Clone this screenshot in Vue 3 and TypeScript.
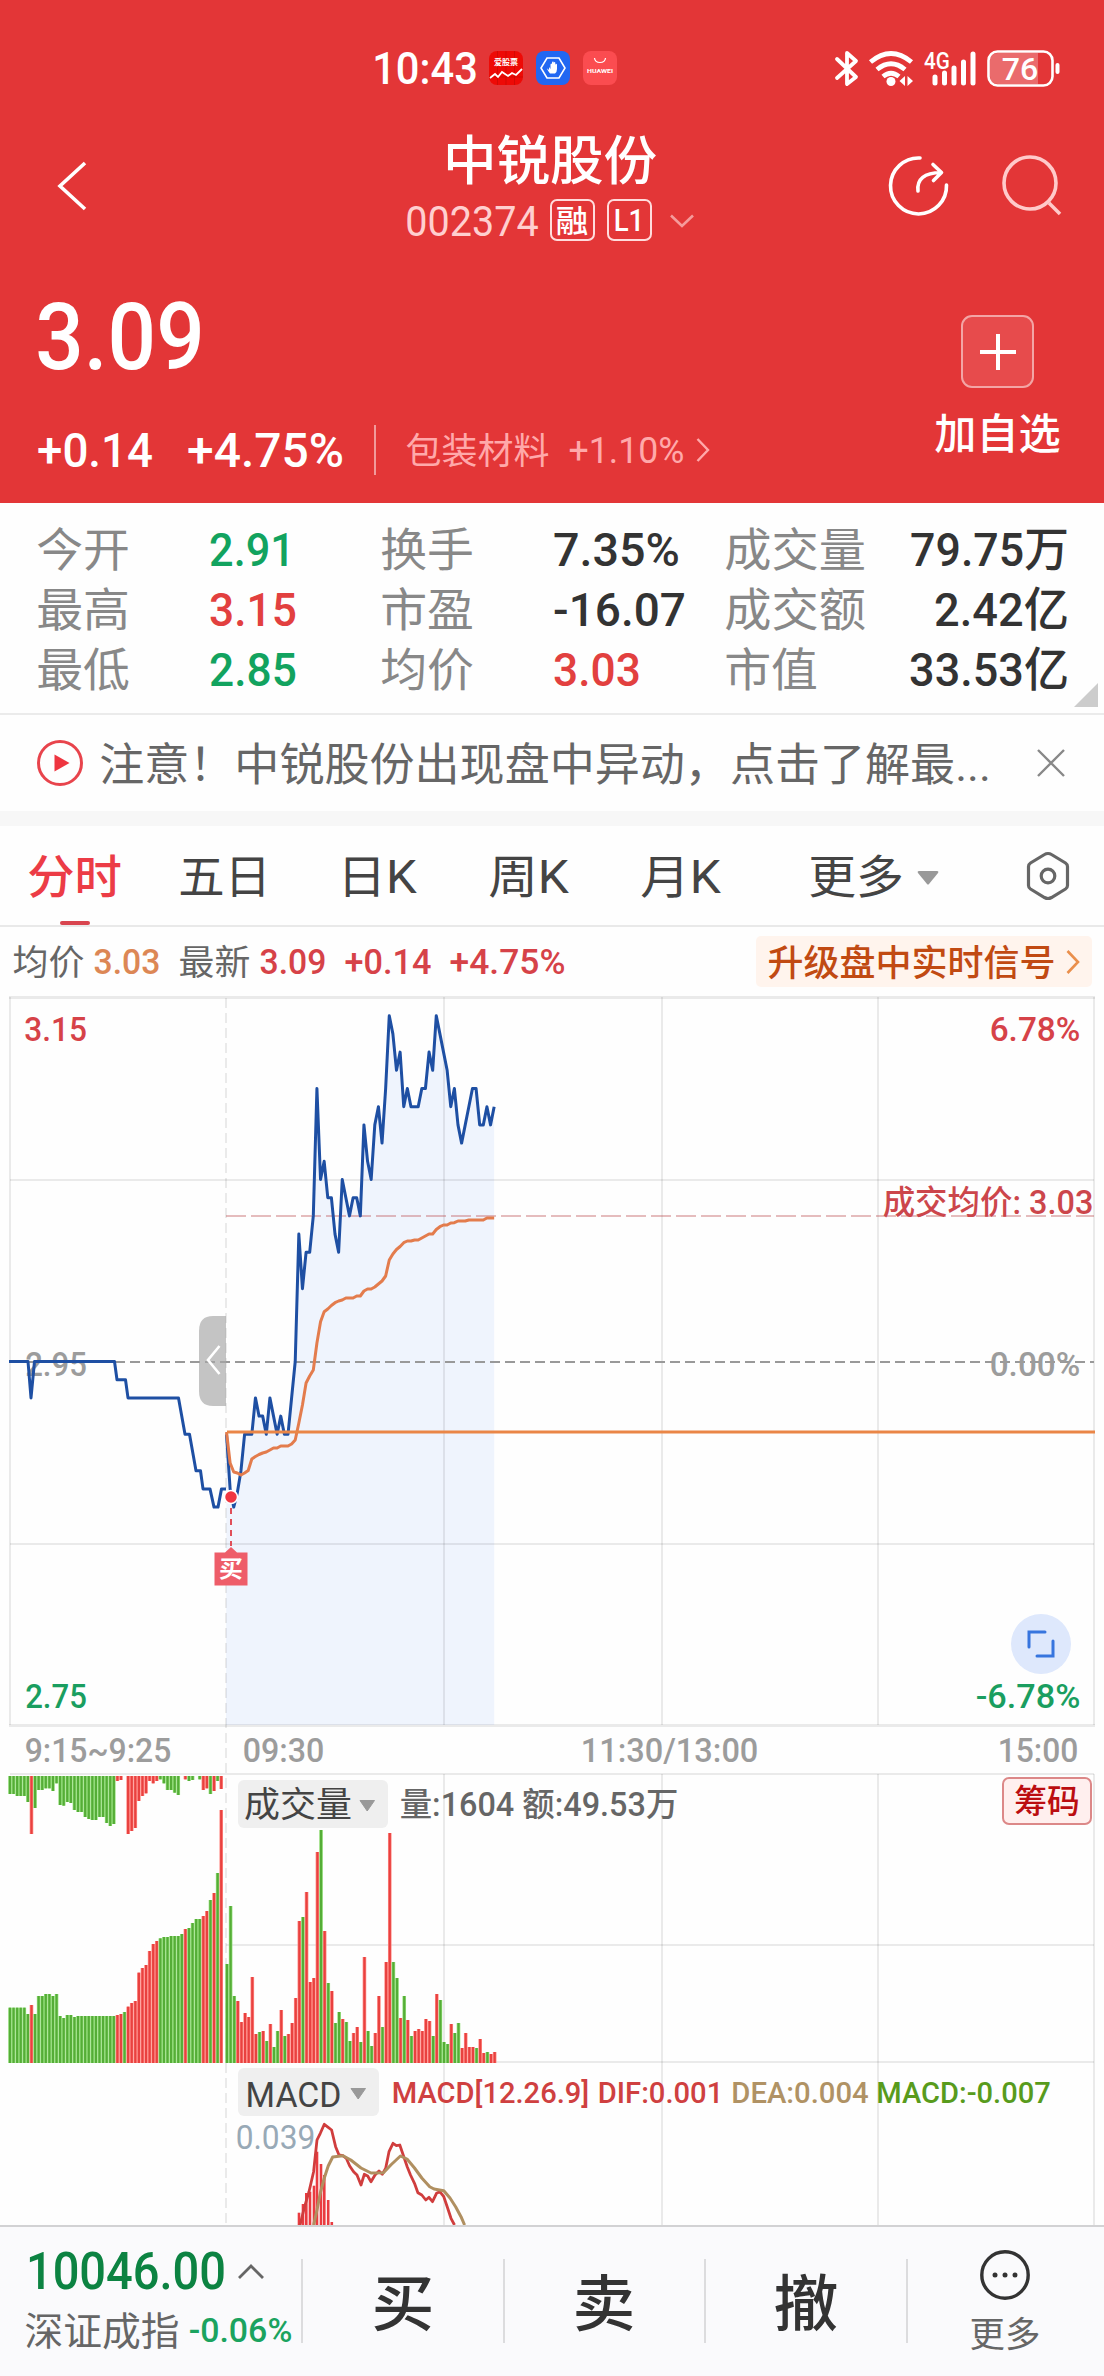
<script setup lang="ts">
import { h, type FunctionalComponent } from 'vue'

interface TxtProps {
  t: string
  w: number
  s: number
  x?: number
  cy?: number
}

// Single-line label fitted to a fixed ink width; in a chart, cy is its vertical centre.
// Han glyphs sit a little higher on the baseline than digits, so they are lowered slightly.
const Txt: FunctionalComponent<TxtProps> = (p) =>
  h(
    'svg',
    {
      width: p.w,
      height: p.s,
      x: p.x,
      y: p.cy === undefined ? undefined : p.cy - p.s / 2,
      overflow: 'visible',
    },
    [
      h(
        'text',
        {
          x: -0.04 * p.s,
          y: (/[0-9A-JL-Z]/.test(p.t) ? 0.855 : 0.878) * p.s,
          'font-size': p.s,
          fill: 'currentColor',
          textLength: p.w + 0.08 * p.s,
          lengthAdjust: 'spacingAndGlyphs',
        },
        p.t,
      ),
    ],
  )
Txt.props = ['t', 'w', 's', 'x', 'cy']

interface Stat {
  label: string
  lw: number
  value: string
  vw: number
  tone: string
}

const stats: Stat[][] = [
  [
    { label: '今开', lw: 90, value: '2.91', vw: 82, tone: 'green' },
    { label: '换手', lw: 90, value: '7.35%', vw: 123, tone: 'dark' },
    { label: '成交量', lw: 138, value: '79.75万', vw: 155, tone: 'dark' },
  ],
  [
    { label: '最高', lw: 90, value: '3.15', vw: 84, tone: 'red' },
    { label: '市盈', lw: 90, value: '-16.07', vw: 129, tone: 'dark' },
    { label: '成交额', lw: 138, value: '2.42亿', vw: 131, tone: 'dark' },
  ],
  [
    { label: '最低', lw: 90, value: '2.85', vw: 84, tone: 'green' },
    { label: '均价', lw: 90, value: '3.03', vw: 84, tone: 'red' },
    { label: '市值', lw: 90, value: '33.53亿', vw: 156, tone: 'dark' },
  ],
]

const tabs = [
  { t: '分时', w: 91, gap: 60, on: true },
  { t: '五日', w: 89, gap: 70, on: false },
  { t: '日K', w: 76, gap: 75, on: false },
  { t: '周K', w: 77, gap: 75, on: false },
  { t: '月K', w: 77, gap: 91, on: false },
]

const zeroY = 1361.5
const tickH = 18.2
const openX = 226.5
const minuteW = 3.617

const priceY = (tick: number): number => zeroY - tick * tickH
const minuteX = (m: number): number => openX + m * minuteW
const join = (pts: number[][]): string => pts.map((p) => p.join(',')).join(' ')

const auction: number[][] = [
  [9, 0], [28, 0], [31, -2], [34.5, 0], [114.5, 0], [117, -1], [125.5, -1], [128, -2], [178.5, -2],
  [185, -4], [189.5, -4], [196, -6], [200.5, -6], [203, -7], [210, -7], [214, -8], [218, -8], [221.5, -7], [226, -7],
]
const auctionLine = join(auction.map(([x, t]) => [x, priceY(t)]))

const ticks: number[] = [
  -4, -7, -8, -7.2, -6, -4, -4, -4, -2, -3, -3, -4, -2, -3, -4, -3, -4, -4, -2, 0, 7, 4, 6, 6, 8, 15, 10, 11, 9, 9, 7, 6,
  10, 9, 8, 9, 9, 8, 13, 11, 10, 13, 14, 12, 15, 19, 18, 16, 17, 14, 15, 14, 14, 14, 15, 15, 17, 16, 19, 18, 17, 16, 14,
  15, 13, 12, 13, 14, 15, 15, 13, 13, 14, 13, 14,
]
const priceLine = join(ticks.map((t, m) => [minuteX(m), priceY(t)]))
const priceArea = `226,1725 ${priceLine} 494.2,1725`

const average: number[] = [
  1432, 1463, 1472, 1473, 1475, 1473, 1470.5, 1459, 1456.5, 1454.5, 1453, 1452, 1450, 1448, 1448, 1446, 1446, 1446, 1444,
  1440, 1423, 1405, 1383, 1376, 1370, 1343, 1321.7, 1311.7, 1309, 1305.5, 1302.7, 1301, 1300, 1298, 1298, 1298, 1296,
  1296, 1291, 1289, 1289, 1287, 1284, 1281, 1276, 1260, 1254, 1249.5, 1246.5, 1242.7, 1241, 1241, 1240, 1240, 1238, 1236,
  1234, 1234, 1229.5, 1226.7, 1225, 1225, 1223, 1222.7, 1221, 1221, 1221, 1220, 1220, 1220, 1220, 1220, 1218, 1218, 1218,
]
const averageLine = join(average.map((y, m) => [minuteX(m), y]))

interface Bar {
  x: number
  y: number
  h: number
  c: string
}

const colour = (code: string): string => (code === 'r' ? 'up' : 'down')

// Auction bars: matched volume grows upwards, unmatched volume hangs from the top edge.
const matched: number[] = [
  166, 166, 166, 166, 166, 147, 174, 147, 201, 201, 207, 207, 201, 207, 141, 135, 144, 144, 138, 141, 141, 141, 141, 141,
  141, 141, 141, 141, 141, 141, 144, 147, 153, 169, 180, 186, 271, 285, 294, 336, 357, 366, 374, 378, 378, 381, 381, 381,
  387, 402, 405, 420, 432, 432, 441, 456, 489, 510, 570, 759,
]
const unmatched: number[] = [
  54, 54, 60, 60, 60, 78, 174, 96, 42, 42, 37, 37, 45, 22, 87, 89, 78, 81, 102, 108, 108, 123, 129, 132, 132, 123, 123,
  141, 150, 144, 15, 12, 0, 174, 165, 156, 75, 60, 52, 15, 22, 15, 10, 22, 42, 42, 50, 57, 0, 10, 15, 12, 0, 10, 42, 37,
  54, 45, 15, 39,
]
const auctionTone = 'ggggggrgggggggggggggggggggggggrrgrrrrrrrrrgggggggrggggrrgrgr'
const auctionBars: Bar[] = matched.flatMap((v, i) => {
  const x = 10 + i * 3.58
  const c = colour(auctionTone[i])
  return [
    { x, y: 2063 - v / 3, h: v / 3, c },
    { x, y: 1776, h: unmatched[i] / 3, c },
  ]
})

const volume: number[] = [
  297, 471, 201, 186, 123, 150, 138, 258, 87, 93, 96, 66, 117, 48, 96, 159, 81, 87, 120, 195, 426, 438, 513, 243, 255,
  633, 699, 396, 240, 216, 120, 153, 132, 123, 66, 90, 108, 63, 318, 96, 51, 90, 201, 108, 303, 690, 303, 255, 135, 201,
  129, 81, 96, 102, 96, 132, 126, 81, 207, 189, 63, 57, 117, 90, 120, 45, 90, 48, 48, 45, 72, 30, 33, 27, 33,
]
const volumeTone = 'gggrrrrrrgrgrggrgrrrrgrrrrgrgrggrggrrgrggrrgrrggrgrgrrrrrgrgggrggrrrrgrrgr'
const volumeBars: Bar[] = volume.map((v, i) => ({
  x: 227 + i * minuteW,
  y: 2063 - v / 3,
  h: v / 3,
  c: colour(volumeTone[i] ?? 'r'),
}))

const bars: Bar[] = [...auctionBars, ...volumeBars]

const macdBars: number[][] = [
  [299, 2212.7], [303, 2204], [306.3, 2193], [310, 2191.7], [314, 2185.7], [317, 2151.7], [321, 2164], [324.3, 2175],
  [328.2, 2200], [331.8, 2222],
]

const dif = join([
  [300, 2225], [304.6, 2206.7], [309, 2191.7], [313.6, 2171.7], [317, 2140], [320.3, 2133.3], [324.3, 2124.3],
  [328.2, 2127.3], [331.6, 2130], [335.6, 2146.7], [339, 2155], [342.9, 2155.7], [346.3, 2158.3], [349.7, 2166],
  [353.6, 2171.7], [357, 2175], [361, 2185], [364.3, 2174.3], [367.7, 2176], [371, 2181.7], [375, 2175], [379, 2171],
  [382.3, 2174.3], [385.7, 2168.3], [389, 2151.7], [393, 2143.3], [396.4, 2145.7], [399.8, 2145], [403.2, 2155],
  [407.2, 2166.7], [410.5, 2175], [414.5, 2183.3], [417.9, 2192.7], [421.8, 2195], [425.8, 2200], [429, 2197.3],
  [432.5, 2201.7], [436.5, 2193.3], [439.8, 2191.7], [443.8, 2196.7], [447.2, 2206.7], [451, 2218.3], [454.5, 2225],
])

const dea = join([
  [313.6, 2225], [317, 2210], [320.3, 2193], [324.3, 2178], [328.2, 2166], [332.7, 2157], [343, 2155.7], [350.8, 2160],
  [361, 2168], [371, 2173], [383.5, 2172.7], [390.8, 2165], [400.4, 2156], [407, 2159], [414.5, 2168], [421.8, 2178],
  [429.7, 2186.7], [434, 2189], [443.8, 2190.7], [450, 2198], [455.6, 2206.7], [461, 2216.7], [464.6, 2225],
])

const trades = [
  { t: '买', w: 58 },
  { t: '卖', w: 58 },
  { t: '撤', w: 60 },
]
</script>

<template>
  <div class="page">
    <header class="top">
      <div class="status">
        <Txt class="mid" t="10:43" :w="102" :s="45" />
        <div class="apps">
          <svg width="34" height="34" viewBox="0 0 34 34">
            <rect width="34" height="34" rx="8" fill="#ee0a06" />
            <path d="M8.5 0V34M17 0V34M25.5 0V34M0 26H34" stroke="#c70804" stroke-width=".7" />
            <text x="5" y="14" font-size="8" font-weight="700" textLength="24" fill="#fff">爱股票</text>
            <path d="M1 27L6 23L9 26L13 21L19 25L23 22L27 24L33 18" fill="none" stroke="#fff" stroke-width="1.8" />
          </svg>
          <svg width="34" height="34" viewBox="0 0 34 34">
            <rect width="34" height="34" rx="8" fill="#2167f2" />
            <path d="M11 7H23L29 17L23 27H11L5 17Z" fill="none" stroke="#fff" stroke-width="1.6" />
            <path d="M13 16V19L11.5 17.5Q10.5 18 14 22.5H19Q21 21 21 18V13.5Q20 12 19.3 14V11.5Q18 10.5 17.6 12V10.8Q16.5 9.8 16 11.5V13Q15 12 14.5 13.5V18Z" fill="#fff" />
          </svg>
          <svg width="34" height="34" viewBox="0 0 34 34">
            <rect width="34" height="34" rx="8" fill="#fb4c50" />
            <path d="M11.5 7Q12 11.5 17 11.5Q22 11.5 22.500 7" fill="none" stroke="#fff" stroke-width="1.2" />
            <text x="4" y="21.5" font-size="6.2" font-weight="700" textLength="26" lengthAdjust="spacingAndGlyphs" fill="#fff">HUAWEI</text>
          </svg>
        </div>
        <svg class="signals" width="227" height="40" viewBox="834 47 227 40" fill="none" stroke="#fff">
          <path d="M837 58L856 76L847 83V52L856 60L837 77" stroke-width="3.8" stroke-linejoin="round" stroke-linecap="round" />
          <g stroke-width="4.800">
            <path d="M870.5 61Q891 44 911.5 61" />
            <path d="M877 68.5Q891 57 905 68.5" />
            <path d="M883 75.5Q891 69 899 75.5" />
          </g>
          <circle cx="891" cy="80.5" r="4.5" fill="#fff" stroke="none" />
          <path d="M905 75L899.5 80L905 85ZM907.5 75L913 80L907.5 85Z" fill="#fff" stroke="none" />
          <Txt class="white mid" t="4G" :w="24" :s="23" :x="925" :cy="59.5" />
          <path d="M935 76V82M944.5 72V82M954 67V82M963.5 61V82M973 53V82" stroke-width="5" stroke-linecap="round" />
          <rect x="988.5" y="50.5" width="64" height="34" rx="9" stroke-width="2.6" />
          <path d="M998 52H1038V83H998Q990 83 990 75V60Q990 52 998 52Z" fill="#ffffff44" stroke="none" />
          <path d="M1057.5 64V71" stroke-width="4" stroke-linecap="round" />
          <Txt class="white mid" t="76" :w="34" :s="32" :x="1003" :cy="67.5" />
        </svg>
      </div>

      <div class="nav">
        <svg width="30" height="50" viewBox="0 0 30 50" fill="none" stroke="#fff" stroke-width="3.600">
          <path d="M28 2L3 25L28 48" />
        </svg>
        <div class="title">
          <Txt class="mid" t="中锐股份" :w="210" :s="53" />
          <div class="code">
            <Txt class="soft" t="002374" :w="130" :s="42" />
            <div class="badge b1"><Txt class="mid" t="融" :w="30" :s="31" /></div>
            <div class="badge b2"><Txt class="mid" t="L1" :w="28" :s="32" /></div>
            <svg width="24" height="14" viewBox="0 0 24 14" fill="none" stroke="#f59b9b" stroke-width="2.600">
              <path d="M1 1.5L12 12L23 1.5" />
            </svg>
          </div>
        </div>
        <svg class="share" width="64" height="64" viewBox="886 154 64 64" fill="none" stroke="#fff" stroke-width="3.600">
          <path d="M919 158A28 28 0 1 0 945.5 185" stroke-linecap="round" />
          <path d="M917 191Q915 173 940 172.5M932 164.5L940.5 172.5L932.5 180.5" stroke-linecap="round" stroke-linejoin="round" />
        </svg>
        <svg width="64" height="64" viewBox="1000 154 64 64" fill="none" stroke="#ffcaca" stroke-width="3.600">
          <circle cx="1029" cy="183" r="26" />
          <path d="M1048 203L1059 214" />
        </svg>
      </div>

      <div class="quote">
        <div class="figures">
          <Txt class="mid" t="3.09" :w="162" :s="92" />
          <div class="change">
            <Txt class="mid" t="+0.14" :w="112" :s="48" />
            <Txt class="mid pct" t="+4.75%" :w="153" :s="48" />
            <i class="bar" />
            <Txt class="faint" t="包装材料" :w="141" :s="36" />
            <Txt class="faint sec" t="+1.10%" :w="113" :s="36" />
            <svg width="14" height="24" viewBox="0 0 14 24" fill="none" stroke="#ffa9aa" stroke-width="2.400">
              <path d="M1.5 1L12 12L1.5 23" />
            </svg>
          </div>
        </div>
        <div class="add">
          <div class="plus">
            <svg width="38" height="38" viewBox="0 0 38 38" stroke="#fff" stroke-width="4">
              <path d="M19 1V37M1 19H37" />
            </svg>
          </div>
          <Txt class="mid" t="加自选" :w="123" :s="42" />
        </div>
      </div>
    </header>

    <section class="stats">
      <div v-for="(row, i) in stats" :key="i" class="stat-row">
        <div v-for="s in row" :key="s.label" class="stat">
          <Txt class="label" :t="s.label" :w="s.lw" :s="46" />
          <Txt class="value" :class="s.tone" :t="s.value" :w="s.vw" :s="47" />
        </div>
      </div>
      <i class="corner" />
    </section>

    <section class="notice">
      <svg width="46" height="48" viewBox="0 0 46 48">
        <circle cx="23" cy="24" r="21.5" fill="none" stroke="#e8444c" stroke-width="3" />
        <path d="M17.5 15.5V32.5L32.5 24Z" fill="#ee3540" />
      </svg>
      <Txt class="grey msg" t="注意！中锐股份出现盘中异动，点击了解最..." :w="888" :s="45" />
      <svg width="28" height="28" viewBox="0 0 28 28" stroke="#888" stroke-width="2.400">
        <path d="M1 1L27 27M27 1L1 27" />
      </svg>
    </section>

    <nav class="tabs">
      <div v-for="t in tabs" :key="t.t" class="tab" :class="{ on: t.on }" :style="{ marginRight: t.gap + 'px' }">
        <Txt :t="t.t" :w="t.w" :s="46" />
      </div>
      <Txt t="更多" :w="92" :s="46" />
      <svg class="drop" width="22" height="14" viewBox="0 0 22 14"><path d="M2 0H20Q22 0 21 2L12 13Q11 14 10 13L1 2Q0 0 2 0Z" fill="#999" /></svg>
      <svg width="44" height="50" viewBox="0 0 44 50" fill="none" stroke="#666" stroke-width="3.200">
        <path d="M22 2.5Q24 2.5 25.5 3.5L39.5 12Q41.5 13.3 41.5 15.5V34.5Q41.5 36.7 39.5 38L25.5 46.5Q22 48.5 18.5 46.5L4.5 38Q2.5 36.7 2.5 34.5V15.5Q2.5 13.3 4.5 12L18.5 3.5Q20 2.5 22 2.5Z" />
        <circle cx="22" cy="25" r="6.800" />
      </svg>
    </nav>

    <section class="summary">
      <Txt class="grey" t="均价" :w="69" :s="35" />
      <Txt class="avg mid g1" t="3.03" :w="64" :s="35.5" />
      <Txt class="grey g2" t="最新" :w="69" :s="35" />
      <Txt class="now mid g3" t="3.09" :w="64" :s="35.5" />
      <Txt class="now mid g2" t="+0.14" :w="84" :s="35.5" />
      <Txt class="now mid g2" t="+4.75%" :w="113" :s="35.5" />
      <div class="upgrade">
        <Txt class="mid" t="升级盘中实时信号" :w="285" :s="36" />
        <svg width="14" height="24" viewBox="0 0 14 24" fill="none" stroke="#ea8f4c" stroke-width="2.600"><path d="M1.5 1L12 12L1.5 23" /></svg>
      </div>
    </section>

    <svg class="chart" width="1104" height="1229" viewBox="0 996 1104 1229">
      <polygon :points="priceArea" fill="#eff4fd" />
      <g fill="none" stroke="#00000014" stroke-width="2">
        <path d="M10 997V1725M444 997V1725M662 997V1725M878 997V1725M1094 997V1725" />
        <path d="M444 1774V2225M662 1774V2225M878 1774V2225M1094 1774V2225" />
        <path d="M10 1180H1094M10 1544H1094M10 1774H1094M226 1945H1094M226 2062H1094" />
        <path d="M9 997.5H1095M9 1725.5H1095" stroke-width="3" />
        <path d="M226 998V2225" stroke-dasharray="10 5" />
      </g>
      <path d="M10 1362H1094" stroke="#999" stroke-width="2" stroke-dasharray="10 5" />
      <path d="M226 1216H1094" stroke="#b9484c5c" stroke-width="2" stroke-dasharray="20 5" />

      <Txt class="now mid" t="3.15" :w="60" :s="33.5" :x="25.500" :cy="1029.3" />
      <Txt class="now mid" t="6.78%" :w="88" :s="33.5" :x="991" :cy="1029.3" />
      <Txt class="mute mid" t="2.95" :w="59" :s="33.5" :x="26.5" :cy="1364.5" />
      <Txt class="mute mid" t="0.00%" :w="88" :s="33.5" :x="991" :cy="1364.5" />
      <Txt class="down-t mid" t="2.75" :w="59" :s="33.5" :x="26.5" :cy="1696.3" />
      <Txt class="down-t mid" t="-6.78%" :w="102" :s="33.5" :x="977" :cy="1696.3" />
      <Txt class="deal mid" t="成交均价: 3.03" :w="208" :s="33" :x="884" :cy="1202.5" />

      <g fill="none" stroke-linejoin="round" stroke-width="3">
        <polyline :points="auctionLine" stroke="#1e4fa3" />
        <polyline :points="priceLine" stroke="#1e4fa3" />
        <polyline :points="averageLine" stroke="#e37c4d" />
        <path d="M227 1432H1095" stroke="#ea8647" />
      </g>

      <path d="M226 1316H213Q199 1316 199 1331V1391Q199 1406 213 1406H226Z" fill="#a7a7a7aa" />
      <path d="M219.5 1346L208 1360L219.5 1374" fill="none" stroke="#fff" stroke-width="2.600" />

      <path d="M231 1508V1546" stroke="#e04f59" stroke-width="2" stroke-dasharray="6 5" />
      <circle cx="231" cy="1497" r="6.5" fill="#f03641" stroke="#fff" stroke-width="1.5" />
      <path d="M214.5 1552.5H225L231 1547L237 1552.5H247.5V1585.5H214.5Z" fill="#ee5d69" />
      <Txt class="white bold" t="买" :w="22" :s="23" :x="220" :cy="1568.5" />

      <circle cx="1041" cy="1644" r="30" fill="#dee8fc" />
      <path d="M1029 1647V1632H1045M1053 1641V1656H1037" fill="none" stroke="#3775de" stroke-width="3" stroke-linecap="round" />

      <Txt class="mute mid" t="9:15~9:25" :w="144" :s="33.5" :x="26" :cy="1750" />
      <Txt class="mute mid" t="09:30" :w="79" :s="33.5" :x="244" :cy="1750" />
      <Txt class="mute mid" t="11:30/13:00" :w="175" :s="33.5" :x="582" :cy="1750" />
      <Txt class="mute mid" t="15:00" :w="78" :s="33.5" :x="999" :cy="1750" />

      <rect v-for="(b, i) in bars" :key="'h' + i" :class="b.c + '-soft'" :x="b.x - 1.8" :y="b.y" width="3.6" :height="b.h" />
      <rect v-for="(b, i) in bars" :key="'b' + i" :class="b.c" :x="b.x - 1.1" :y="b.y" width="2.2" :height="b.h" />

      <rect x="238" y="1780" width="150" height="48" rx="6" fill="#efefef" />
      <Txt class="ink" t="成交量" :w="105" :s="35.5" :x="245.5" :cy="1803.5" />
      <path d="M360 1800.5H374.5L367.2 1811Z" fill="#999" stroke="#999" stroke-linejoin="round" />
      <Txt class="grey value" t="量:1604 额:49.53万" :w="276" :s="33" :x="401" :cy="1804" />
      <rect x="1003" y="1778" width="88" height="46" rx="6" fill="#ffefee" stroke="#dc8888" stroke-width="2" />
      <Txt class="chips mid" t="筹码" :w="63" :s="32.5" :x="1015.5" :cy="1801" />

      <rect x="238" y="2068" width="141" height="48" rx="6" fill="#efefef" />
      <Txt class="ink" t="MACD" :w="93" :s="35.5" :x="247" :cy="2094" />
      <path d="M351 2088.5H365.5L358.2 2099Z" fill="#999" stroke="#999" stroke-linejoin="round" />
      <Txt class="dif-t mid" t="MACD[12.26.9]" :w="195" :s="30" :x="393" :cy="2092.3" />
      <Txt class="dif-t mid" t="DIF:0.001" :w="123" :s="30" :x="599" :cy="2092.3" />
      <Txt class="dea-t mid" t="DEA:0.004" :w="135" :s="30" :x="732.5" :cy="2092.3" />
      <Txt class="macd-t mid" t="MACD:-0.007" :w="172" :s="30" :x="877.5" :cy="2092.3" />
      <Txt class="scale" t="0.039" :w="77" :s="33" :x="237" :cy="2137" />

      <path v-for="m in macdBars" :key="m[0]" :d="`M${m[0]} ${m[1]}V2225`" stroke="#ea3b40" stroke-width="2.600" />
      <polyline :points="dif" fill="none" stroke="#d03d3d" stroke-width="2.800" stroke-linejoin="round" />
      <polyline :points="dea" fill="none" stroke="#b08f60" stroke-width="3" stroke-linejoin="round" />
    </svg>

    <footer class="dock">
      <div class="index">
        <div class="line">
          <Txt class="idx mid" t="10046.00" :w="196" :s="52" />
          <svg width="26" height="15" viewBox="0 0 26 15" fill="none" stroke="#666" stroke-width="2.800"><path d="M1 14L13 2L25 14" /></svg>
        </div>
        <div class="line second">
          <Txt class="grey" t="深证成指" :w="152" :s="38.5" />
          <Txt class="idx-pct mid" t="-0.06%" :w="101" :s="33" />
        </div>
      </div>
      <div v-for="t in trades" :key="t.t" class="trade">
        <Txt class="mid" :t="t.t" :w="t.w" :s="61" />
      </div>
      <div class="more">
        <svg width="50" height="50" viewBox="0 0 50 50">
          <circle cx="25" cy="25" r="23.2" fill="none" stroke="#333" stroke-width="3.400" />
          <circle cx="15" cy="25" r="2.5" fill="#333" />
          <circle cx="25" cy="25" r="2.5" fill="#333" />
          <circle cx="35" cy="25" r="2.5" fill="#333" />
        </svg>
        <Txt class="grey" t="更多" :w="68" :s="35" />
      </div>
    </footer>
  </div>
</template>

<style>
body {
  margin: 0;
}
</style>

<style scoped>
.page {
  width: 1104px;
  height: 2376px;
  display: flex;
  flex-direction: column;
  overflow: hidden;
  background: #fefefe;
  color: #444;
  font-family: Roboto, 'Noto Sans CJK SC', sans-serif;
}
.page svg {
  display: block;
  flex: none;
}
.mid { font-weight: 500; }
.bold { font-weight: 700; }
.value { font-weight: 500; }
.white { color: #fff; stroke: none; }
.soft { color: #ffcfcf; }
.faint { color: #ffa9aa; }
.green { color: #12a35f; }
.red { color: #e2403f; }
.dark { color: #333; }
.grey { color: #666; }
.mute { color: #9c9c9c; }
.ink { color: #444; }
.label { color: #888; }
.avg { color: #dc8755; }
.now { color: #d64248; }
.deal { color: #cc464b; }
.down-t { color: #1a9e60; }
.chips { color: #bb0d10; }
.dif-t { color: #cf4040; }
.dea-t { color: #b09264; }
.macd-t { color: #589b1c; }
.scale { color: #98a9b6; }
.up { fill: #e9413f; }
.down { fill: #55ad37; }
.up-soft { fill: #ff8d88; }
.down-soft { fill: #97e07e; }

.top {
  height: 503px;
  flex: none;
  background: #e33637;
  color: #fff;
}
.status {
  display: flex;
  align-items: center;
  height: 86px;
  padding: 25px 43px 0 374px;
}
.apps {
  display: flex;
  gap: 13px;
  margin-left: 13px;
}
.signals { margin-left: auto; }
.nav {
  display: flex;
  align-items: center;
  height: 112px;
  margin-top: 19px;
  padding-left: 57px;
}
.title {
  display: flex;
  flex-direction: column;
  align-items: center;
  width: 288px;
  margin: 0 193px 0 319px;
  padding-top: 4px;
  gap: 13px;
}
.share { margin-right: 50px; }
.code {
  display: flex;
  align-items: center;
  height: 44px;
}
.badge {
  display: flex;
  align-items: center;
  justify-content: center;
  width: 45px;
  height: 42px;
  box-sizing: border-box;
  border: 2px solid #ffdcdc;
  border-radius: 7px;
  margin-bottom: 2px;
}
.b1 { margin-left: 13px; }
.b2 { margin: 0 18px 2px 12px; }
.quote {
  display: flex;
  justify-content: space-between;
  padding: 48px 45px 0 39px;
}
.change {
  display: flex;
  align-items: center;
  height: 50px;
  margin-top: 43px;
}
.pct { margin-left: 38px; }
.bar {
  width: 2px;
  height: 50px;
  margin: 0 31px 0 32px;
  background: #f19a9b;
}
.sec { margin: 0 13px 0 22px; }
.add {
  display: flex;
  flex-direction: column;
  align-items: center;
  gap: 24px;
  padding-top: 25px;
}
.plus {
  display: flex;
  align-items: center;
  justify-content: center;
  width: 73px;
  height: 73px;
  box-sizing: border-box;
  border: 2px solid #f3a5a5;
  border-radius: 11px;
  background: #e74b4c;
}

.stats {
  position: relative;
  flex: none;
  height: 212px;
  box-sizing: border-box;
  padding: 16px 37px 0 38px;
  border-bottom: 2px solid #ebebeb;
}
.stat-row {
  display: grid;
  grid-template-columns: 344px 344px 341px;
  align-items: center;
  height: 60px;
}
.stat {
  display: grid;
  grid-template-columns: 173px 1fr;
}
.stat:last-child {
  display: flex;
  justify-content: space-between;
}
.corner {
  position: absolute;
  right: 6px;
  bottom: 6px;
  border-style: solid;
  border-width: 0 0 24px 24px;
  border-color: transparent transparent #ccc transparent;
}
.notice {
  display: flex;
  align-items: center;
  flex: none;
  height: 96px;
  padding-left: 37px;
}
.msg { margin: 0 48px 0 18px; }
.tabs {
  display: flex;
  align-items: center;
  flex: none;
  height: 116px;
  box-sizing: border-box;
  padding-left: 29px;
  border-top: 15px solid #f7f7f7;
  border-bottom: 2px solid #e9e9e9;
}
.tab {
  position: relative;
  display: flex;
  align-items: center;
  height: 99px;
}
.on {
  color: #ec3c46;
  font-weight: 500;
}
.on::after {
  content: '';
  position: absolute;
  left: 31px;
  bottom: 0;
  width: 30px;
  height: 4px;
  border-radius: 2px;
  background: #d9454f;
}
.drop { margin: 4px 87px 0 15px; }
.summary {
  display: flex;
  align-items: center;
  flex: none;
  height: 69px;
  padding: 0 12px 0 14px;
}
.g1 { margin-left: 12px; }
.g2 { margin-left: 21px; }
.g3 { margin-left: 12px; }
.upgrade {
  display: flex;
  align-items: center;
  gap: 12px;
  margin-left: auto;
  width: 336px;
  height: 51px;
  box-sizing: border-box;
  padding-left: 13px;
  border-radius: 5px;
  background: #fff4ed;
  color: #c14a12;
}
.dock {
  display: flex;
  flex: none;
  height: 151px;
  box-sizing: border-box;
  border-top: 2px solid #d2d2d4;
  background: #fafafc;
}
.index {
  width: 301px;
  box-sizing: border-box;
  padding: 18px 0 0 28px;
}
.line {
  display: flex;
  align-items: center;
  gap: 14px;
}
.second {
  gap: 12px;
  margin: 14px 0 0 -2px;
}
.idx { color: #0c8342; }
.idx-pct { color: #1ba35f; }
.trade {
  display: flex;
  align-items: center;
  justify-content: center;
  width: 202px;
  height: 84px;
  margin-top: 32px;
  box-sizing: border-box;
  padding-top: 2px;
  border-left: 2px solid #dcdcde;
  color: #333;
}
.more {
  display: flex;
  flex-direction: column;
  align-items: center;
  gap: 16px;
  width: 198px;
  height: 107px;
  margin-top: 23px;
  position: relative;
}
.more::before {
  content: '';
  position: absolute;
  left: 0;
  top: 9px;
  width: 2px;
  height: 84px;
  background: #dcdcde;
}
</style>
